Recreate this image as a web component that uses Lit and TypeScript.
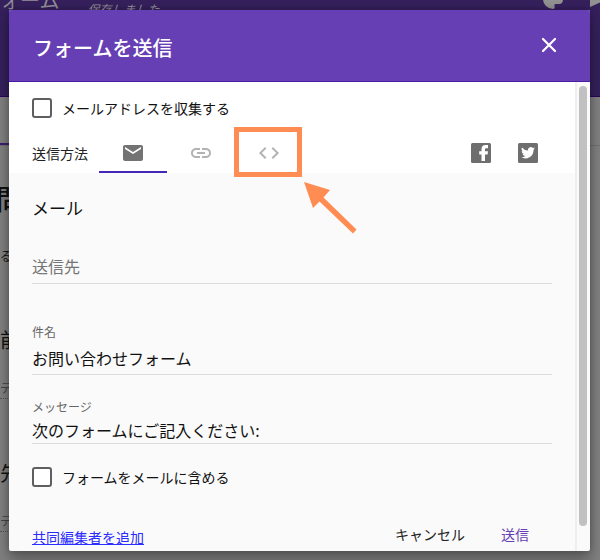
import { LitElement, html, css, svg } from "lit";
import { customElement, state } from "lit/decorators.js";
import { classMap } from "lit/directives/class-map.js";

const icons = {
  mail: svg`<path d="M20 4H4c-1.100 0-1.990.9-1.990 2L2 18c0 1.100.9 2 2 2h16c1.100 0 2-.9 2-2V6c0-1.100-.9-2-2-2zm0 4l-8 5-8-5V6l8 5 8-5v2z"/>`,
  link: svg`<path d="M3.900 12c0-1.710 1.390-3.100 3.100-3.100h4V7H7c-2.760 0-5 2.240-5 5s2.240 5 5 5h4v-1.900H7c-1.710 0-3.100-1.390-3.100-3.100zM8 13h8v-2H8v2zm9-6h-4v1.900h4c1.710 0 3.100 1.390 3.100 3.100s-1.390 3.100-3.100 3.100h-4V17h4c2.760 0 5-2.240 5-5s-2.240-5-5-5z"/>`,
  code: svg`<path d="M9.400 16.600L4.800 12l4.600-4.600L8 6l-6 6 6 6 1.400-1.400zm5.200 0l4.600-4.600-4.600-4.600L16 6l6 6-6 6-1.400-1.400z"/>`,
};

/** The form editor that lies dimmed behind the dialog. */
@customElement("form-editor")
class FormEditor extends LitElement {
  static styles = css`
    :host {
      display: block;
      min-height: 100vh;
      background: #808080;
      color: #111;
    }
    header {
      display: flex;
      align-items: flex-start;
      height: 96px;
      background: #35205c;
      border-bottom: 1px solid #2b0462;
      color: #938f98;
      white-space: nowrap;
    }
    .name {
      margin: -12px 0 0 -20px;
      font-size: 20px;
      line-height: 24px;
    }
    .saved {
      margin: 0 0 0 28px;
      font-size: 12px;
      line-height: 18px;
      font-style: italic;
    }
    .tools {
      display: flex;
      gap: 26px;
      margin: -12px -14px 0 auto;
      fill: #929292;
    }
    .tabline {
      height: 48px;
      border-bottom: 1px solid #707070;
    }
    .tabline::after {
      content: "";
      display: block;
      width: 10px;
      height: 46px;
      border-bottom: 2px solid #3a2070;
    }
    .page {
      width: 10px;
      overflow: hidden;
      white-space: nowrap;
    }
    h1, h2, p {
      margin: 0;
      font-weight: 400;
    }
    h1 {
      margin-top: 32px;
      font-size: 28px;
      line-height: 40px;
      font-weight: 500;
      text-indent: -4px;
    }
    .about {
      margin-top: 28px;
      font-size: 12px;
      line-height: 20px;
    }
    h2 {
      margin-top: 60px;
      font-size: 20px;
      line-height: 28px;
    }
    .answer {
      margin-top: 24px;
      font-size: 12px;
      line-height: 20px;
      color: #444;
      border-bottom: 1px dotted #555;
    }
  `;
  render() {
    return html`
      <header>
        <p class="name">フォーム</p>
        <p class="saved">保存しました</p>
        <div class="tools">
          <svg width="22" height="22" viewBox="0 0 22 22"><path d="M11 1a10 10 0 0 0 0 20c1.500 0 2-1 1.500-2.500-.5-2 .5-2.500 2-2.500H17c3 0 4-2 4-5 0-6-4-10-10-10z"/></svg>
          <svg width="24" height="22" viewBox="0 0 24 22"><path d="M0 0v19l24-11z"/></svg>
        </div>
      </header>
      <div class="tabline"></div>
      <div class="page">
        <h1>問</h1>
        <p class="about">る</p>
        <h2>前</h2>
        <p class="answer">テ</p>
        <h2>先</h2>
        <p class="answer">テ</p>
      </div>
    `;
  }
}

/** The dialog that sends the form. */
@customElement("send-dialog")
class SendDialog extends LitElement {
  @state() private method = "mail";

  static styles = css`
    :host {
      display: block;
      background: #fafafa;
      border-radius: 2px;
      box-shadow: 0 12px 15px rgba(0, 0, 0, 0.24), 0 0 8px rgba(0, 0, 0, 0.3);
      color: #111;
      font-size: 14px;
    }
    * {
      box-sizing: border-box;
    }
    button, input, textarea {
      margin: 0;
      padding: 0;
      border: 0;
      background: none;
      color: inherit;
      font: inherit;
    }
    button {
      cursor: pointer;
    }
    header {
      display: flex;
      align-items: center;
      justify-content: space-between;
      height: 72px;
      padding: 4px 29px 0 24px;
      background: #673fb4;
      border-bottom: 1px solid #4d1aa6;
      border-radius: 2px 2px 0 0;
      color: #fff;
    }
    h1, h2 {
      margin: 0;
      font-weight: 400;
    }
    h1 {
      font-size: 20px;
      line-height: 28px;
      font-weight: 500;
    }
    .close {
      display: flex;
      padding-bottom: 6px;
    }
    .body {
      display: flex;
    }
    .content {
      flex: 1;
      min-width: 0;
    }
    .track {
      display: flex;
      width: 15px;
      padding: 4px 0 25px 2px;
      border-left: 2px solid #eeeeee;
    }
    .thumb {
      width: 8px;
      border-radius: 4px;
      background: #c1c1c1;
    }
    .top {
      padding: 16px 23px 0;
      background: #fff;
    }
    .check {
      display: flex;
      align-items: center;
      gap: 10px;
      height: 20px;
    }
    .check input {
      appearance: none;
      width: 20px;
      height: 20px;
      border: 2px solid #5f5f5f;
      border-radius: 3px;
      background: #fff;
    }
    .check input:checked {
      background: #673fb4;
    }
    .methods {
      display: flex;
      align-items: center;
      height: 40px;
      margin-top: 15px;
    }
    .caption {
      width: 67px;
      white-space: nowrap;
      color: #222;
    }
    .tabs {
      display: flex;
    }
    .tab {
      position: relative;
      display: flex;
      align-items: center;
      justify-content: center;
      width: 68px;
      height: 40px;
      border-top: 2px solid transparent;
      border-bottom: 2px solid transparent;
      fill: #b3b3b3;
    }
    .tab.on {
      border-bottom-color: #4527b5;
      fill: #737373;
    }
    .mark {
      position: absolute;
      inset: -8px 1px -6px -1px;
      border: 5px solid #ff8c52;
    }
    .arrow {
      position: absolute;
      left: 68px;
      top: 46px;
      z-index: 1;
    }
    .share {
      display: flex;
      gap: 27px;
      margin-left: auto;
      padding-right: 14px;
    }
    .share button {
      display: flex;
    }
    .form {
      padding: 20px 23px 1px;
    }
    h2 {
      font-size: 17px;
      line-height: 30px;
    }
    .field {
      display: flex;
      flex-direction: column;
      gap: 4px;
      border-bottom: 1px solid #dadada;
    }
    .field label {
      font-size: 12px;
      line-height: 16px;
      color: #666;
    }
    .field input, .field textarea {
      width: 100%;
      font-size: 16px;
      outline: none;
      resize: none;
    }
    .to {
      margin-top: 28px;
    }
    .to input {
      height: 30px;
      margin-bottom: 2px;
    }
    .to input::placeholder {
      color: #757575;
      opacity: 1;
    }
    .subject {
      margin-top: 40px;
    }
    .subject input {
      height: 28px;
      margin-bottom: 2px;
    }
    .message {
      margin-top: 24px;
    }
    .message textarea {
      height: 24px;
      line-height: 22px;
      overflow: hidden;
    }
    .include {
      margin-top: 23px;
    }
    footer {
      display: flex;
      align-items: center;
      margin-top: 31px;
    }
    footer a {
      margin-right: auto;
      padding-top: 6px;
      color: #2b2bff;
    }
    footer button {
      height: 32px;
      padding: 0 8px;
      color: #222;
    }
    .actions {
      display: flex;
      gap: 20px;
      padding-right: 15px;
    }
    .actions .send {
      color: #673fb4;
    }
  `;

  private tab(id: "mail" | "link" | "code", name: string, extra: unknown = "") {
    return html`<button
      class=${classMap({ tab: true, on: this.method === id })}
      role="tab"
      aria-label=${name}
      aria-selected=${this.method === id ? "true" : "false"}
      @click=${() => (this.method = id)}
    ><svg width="24" height="24" viewBox="0 0 24 24">${icons[id]}</svg>${extra}</button>`;
  }

  render() {
    const marker = html`<span class="mark"></span>
      <svg class="arrow" width="56" height="56" viewBox="0 0 56 56">
        <path fill="#ff8c52" d="M1 1L27 9L20.500 16.500L53.500 48.500L50 52.500L16.500 20.500L10 27z"/>
      </svg>`;
    return html`
      <header>
        <h1>フォームを送信</h1>
        <button class="close" aria-label="閉じる">
          <svg width="24" height="24" viewBox="0 0 24 24"><path d="M6 6L18 18M18 6L6 18" stroke="#fff" stroke-width="2.200" stroke-linecap="round"/></svg>
        </button>
      </header>
      <div class="body">
        <div class="content">
          <div class="top">
            <label class="check"><input type="checkbox" />メールアドレスを収集する</label>
            <div class="methods">
              <span class="caption">送信方法</span>
              <div class="tabs" role="tablist">
                ${this.tab("mail", "メール")}${this.tab("link", "リンク")}${this.tab("code", "HTML", marker)}
              </div>
              <div class="share">
                <button aria-label="Facebook">
                  <svg width="20" height="20" viewBox="0 0 20 20"><rect width="20" height="20" rx="1.500" fill="#6e6e6e"/><path fill="#fff" d="M10.500 18v-6.500H8.200V8.300h2.300V6.200C10.500 3.500 12 2 14.500 2H17v3.200h-1.600c-1 0-1.400.4-1.400 1.300v1.800h3l-.4 3.200H14V18z"/></svg>
                </button>
                <button aria-label="Twitter">
                  <svg width="20" height="20" viewBox="0 0 20 20"><rect width="20" height="20" rx="1.500" fill="#6e6e6e"/><path fill="#fff" d="M17 5.300a5 5 0 0 1-1.600.5 2.800 2.800 0 0 0 1.200-1.500 5.500 5.500 0 0 1-1.800.7 2.900 2.900 0 0 0-4.900 2.600A8 8 0 0 1 4 4.600a2.900 2.900 0 0 0 .9 3.800 2.800 2.800 0 0 1-1.300-.4 2.900 2.900 0 0 0 2.300 2.900 3 3 0 0 1-1.300 0 2.900 2.900 0 0 0 2.700 2A5.700 5.700 0 0 1 3 14.100a8.100 8.100 0 0 0 12.500-7.200A6 6 0 0 0 17 5.300z"/></svg>
                </button>
              </div>
            </div>
          </div>
          <div class="form">
            <h2>メール</h2>
            <div class="field to"><input type="text" placeholder="送信先" aria-label="送信先" /></div>
            <div class="field subject">
              <label for="subject">件名</label>
              <input id="subject" type="text" value="お問い合わせフォーム" />
            </div>
            <div class="field message">
              <label for="message">メッセージ</label>
              <textarea id="message" rows="1" .value=${"次のフォームにご記入ください:"}></textarea>
            </div>
            <label class="check include"><input type="checkbox" />フォームをメールに含める</label>
            <footer>
              <a href="#">共同編集者を追加</a>
              <div class="actions">
                <button>キャンセル</button>
                <button class="send">送信</button>
              </div>
            </footer>
          </div>
        </div>
        <div class="track"><div class="thumb"></div></div>
      </div>
    `;
  }
}

@customElement("app-root")
class AppRoot extends LitElement {
  static styles = css`
    :host {
      display: block;
      position: relative;
      overflow: hidden;
      min-height: 100vh;
      font-family: "Noto Sans CJK JP", sans-serif;
    }
    .over {
      position: absolute;
      inset: 0;
      padding: 10px 10px 9px 9px;
    }
  `;
  render() {
    return html`<form-editor></form-editor>
      <div class="over"><send-dialog role="dialog" aria-modal="true" aria-label="フォームを送信"></send-dialog></div>`;
  }
}
